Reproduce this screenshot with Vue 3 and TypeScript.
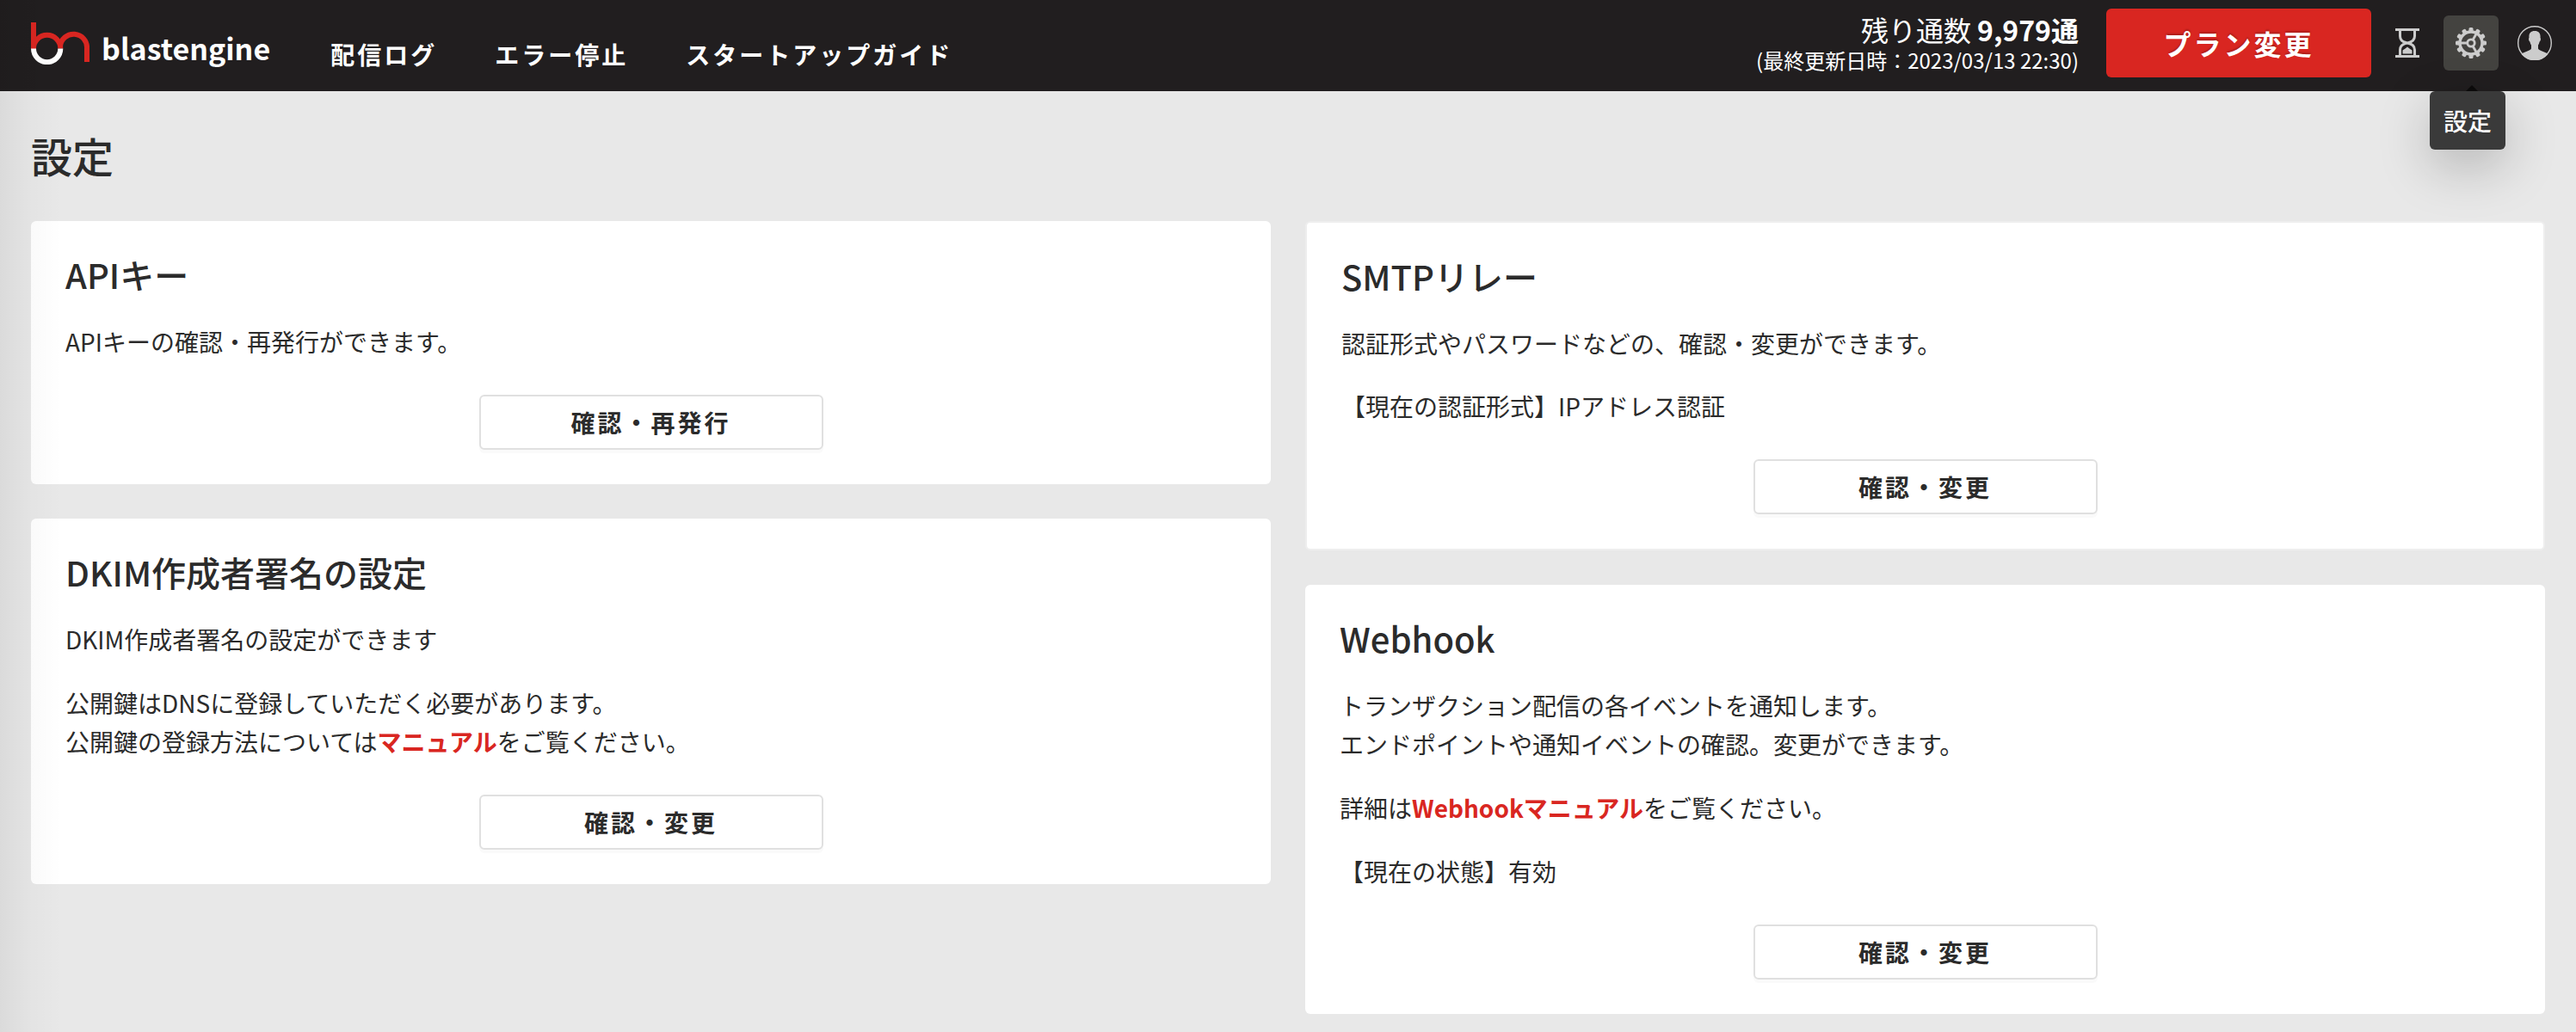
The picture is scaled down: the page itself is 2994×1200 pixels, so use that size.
<script setup lang="ts">
interface Segment {
  text: string
  href?: string
}
interface Card {
  id: string
  title: string
  paragraphs: Segment[][][]
  action: string
  outlined?: boolean
}

const navItems: string[] = ['配信ログ', 'エラー停止', 'スタートアップガイド']

const columns: Card[][] = [
  [
    {
      id: 'api',
      title: 'APIキー',
      paragraphs: [[[{ text: 'APIキーの確認・再発行ができます。' }]]],
      action: '確認・再発行',
    },
    {
      id: 'dkim',
      title: 'DKIM作成者署名の設定',
      paragraphs: [
        [[{ text: 'DKIM作成者署名の設定ができます' }]],
        [
          [{ text: '公開鍵はDNSに登録していただく必要があります。' }],
          [
            { text: '公開鍵の登録方法については' },
            { text: 'マニュアル', href: '#manual' },
            { text: 'をご覧ください。' },
          ],
        ],
      ],
      action: '確認・変更',
    },
  ],
  [
    {
      id: 'smtp',
      title: 'SMTPリレー',
      outlined: true,
      paragraphs: [
        [[{ text: '認証形式やパスワードなどの、確認・変更ができます。' }]],
        [[{ text: '【現在の認証形式】IPアドレス認証' }]],
      ],
      action: '確認・変更',
    },
    {
      id: 'webhook',
      title: 'Webhook',
      paragraphs: [
        [
          [{ text: 'トランザクション配信の各イベントを通知します。' }],
          [{ text: 'エンドポイントや通知イベントの確認。変更ができます。' }],
        ],
        [
          [
            { text: '詳細は' },
            { text: 'Webhookマニュアル', href: '#webhook-manual' },
            { text: 'をご覧ください。' },
          ],
        ],
        [[{ text: '【現在の状態】有効' }]],
      ],
      action: '確認・変更',
    },
  ],
]

const teeth: number[] = Array.from({ length: 12 }, (_, i) => i * 30)
</script>

<template>
  <div class="page">
    <header class="header">
      <a class="brand" href="#top">
        <svg class="brand-mark" viewBox="0 0 68 49" aria-hidden="true">
          <path d="M3 0V31" stroke="#d92621" stroke-width="6" fill="none" />
          <path d="M3 30.500A15.600 15.600 0 0 1 34.300 30.500" stroke="#d92621" stroke-width="6" fill="none" />
          <path d="M34 28A15.500 15.500 0 0 1 65 30.500V46" stroke="#d92621" stroke-width="6" fill="none" />
          <path d="M3 30.500A15.600 15.600 0 0 0 34.300 30.500" stroke="#fff" stroke-width="6" fill="none" />
        </svg>
        <span class="brand-name">blastengine</span>
      </a>
      <nav class="nav">
        <a v-for="item in navItems" :key="item" class="nav-link" href="#nav">{{ item }}</a>
      </nav>
      <div class="quota">
        <div class="quota-count">残り通数 <strong>9,979通</strong></div>
        <div class="quota-date">(最終更新日時：2023/03/13 22:30)</div>
      </div>
      <button class="plan-button" type="button">プラン変更</button>
      <div class="tools">
        <button class="tool" type="button" aria-label="履歴">
          <svg viewBox="0 0 40 40" aria-hidden="true">
            <path d="M6 3h28v3H6zM6 34h28v3H6z" fill="#ccc" />
            <path
              d="M11.500 6v6c0 4 3 7 8.500 8 5.500-1 8.500-4 8.500-8V6M11.500 34v-6c0-4 3-7 8.500-8 5.500 1 8.500 4 8.500 8v6"
              fill="none" stroke="#ccc" stroke-width="3"
            />
            <path d="M14.500 32.500v-4l3-2 2.500-2 2.500 2 3 2v4z" fill="#ccc" />
          </svg>
        </button>
        <div class="tool-wrap">
          <button class="tool tool-active" type="button" aria-label="設定" aria-describedby="settings-tip">
            <svg viewBox="0 0 40 40" aria-hidden="true">
              <g fill="none" stroke="#ccc">
                <circle cx="20" cy="20" r="13" stroke-width="3.400" />
                <circle cx="20" cy="20" r="4.200" stroke-width="2.800" />
                <path d="M16 20H7M22 16.500L26.500 8.700M22 23.500L26.500 31.300" stroke-width="2.800" />
              </g>
              <rect
                v-for="angle in teeth" :key="angle"
                x="17.500" y="2" width="5" height="5" rx="1.500" fill="#ccc"
                :transform="`rotate(${angle} 20 20)`"
              />
            </svg>
          </button>
          <div id="settings-tip" class="tooltip" role="tooltip">設定</div>
        </div>
        <button class="tool" type="button" aria-label="アカウント">
          <svg viewBox="0 0 40 40" aria-hidden="true">
            <circle cx="20" cy="20" r="19.300" fill="none" stroke="#ccc" stroke-width="1.400" />
            <path
              d="M20 6c-5 0-7 3-6.500 8-1 .5-.3 4 .9 4.500.4 2 1 3 1.600 4v4c-1 3-9 3.500-11.500 6.500a20 20 0 0 0 31 0C33 30 25 29.500 24 26.500v-4c.6-1 1.200-2 1.600-4 1.200-.5 1.900-4 .9-4.500C27 9 25 6 20 6z"
              fill="#ccc"
            />
          </svg>
        </button>
      </div>
    </header>

    <main class="main">
      <h1 class="page-title">設定</h1>
      <div class="columns">
        <div v-for="(cards, c) in columns" :key="c" class="column">
          <section v-for="card in cards" :key="card.id" class="card" :class="{ outlined: card.outlined }">
            <h2 class="card-title">{{ card.title }}</h2>
            <div class="card-text">
              <p v-for="(lines, p) in card.paragraphs" :key="p">
                <span v-for="(line, l) in lines" :key="l" class="line"
                  ><template v-for="(seg, s) in line" :key="s"
                    ><a v-if="seg.href" :href="seg.href">{{ seg.text }}</a
                    ><template v-else>{{ seg.text }}</template></template
                  ></span
                >
              </p>
            </div>
            <button class="card-button" type="button">{{ card.action }}</button>
          </section>
        </div>
      </div>
    </main>
  </div>
</template>

<style>
body {
  background: #e8e8e8;
}
</style>

<style scoped>
.page {
  position: relative;
  min-height: 100vh;
  color: #2b2b2b;
  font-family: 'Noto Sans CJK JP', sans-serif;
  font-size: 28px;
  line-height: 45px;
}
.page::before {
  content: '';
  position: absolute;
  inset: 0 auto 0 0;
  width: 72px;
  background: linear-gradient(to right, rgba(0, 0, 0, 0.06), rgba(0, 0, 0, 0.02) 36px, transparent);
  pointer-events: none;
}
button {
  margin: 0;
  padding: 0;
  border: 0;
  font: inherit;
  color: inherit;
  cursor: pointer;
}
.header {
  display: flex;
  align-items: center;
  box-sizing: border-box;
  height: 106px;
  padding: 0 16px 6px 36px;
  background: #211e1f;
  color: #fff;
}
.brand {
  display: flex;
  align-items: center;
  gap: 14px;
  color: #fff;
  text-decoration: none;
}
.brand-mark {
  width: 68px;
  height: 49px;
}
.brand-name {
  padding-top: 10px;
  font-size: 34px;
  font-weight: 700;
}
.nav {
  display: flex;
  gap: 67px;
  margin-left: 70px;
  padding-top: 26px;
}
.nav-link {
  color: #fff;
  font-weight: 700;
  letter-spacing: 3px;
  text-decoration: none;
}
.quota {
  margin-left: auto;
  padding-top: 4px;
  text-align: right;
  white-space: nowrap;
}
.quota-count {
  font-size: 32px;
  line-height: 36px;
}
.quota-date {
  font-size: 24px;
  line-height: 36px;
}
.plan-button {
  width: 308px;
  height: 80px;
  margin-left: 32px;
  border-radius: 6px;
  background: #d92621;
  font-size: 32px;
  font-weight: 700;
  letter-spacing: 3px;
  text-shadow: 0 -2px 2px rgba(0, 0, 0, 0.2);
}
.tools {
  display: flex;
  gap: 10px;
  margin-left: 10px;
}
.tool {
  display: flex;
  align-items: center;
  justify-content: center;
  width: 64px;
  height: 64px;
  border-radius: 6px;
  background: transparent;
}
.tool svg {
  width: 40px;
  height: 40px;
}
.tool-active {
  background: #444340;
}
.tool-wrap {
  position: relative;
}
.tooltip {
  position: absolute;
  top: 88px;
  right: -8px;
  box-sizing: border-box;
  width: 88px;
  height: 68px;
  border-radius: 6px;
  background: #3a3a3a;
  box-shadow: 0 20px 60px rgba(0, 0, 0, 0.22);
  font-weight: 500;
  line-height: 68px;
  text-align: center;
}
.tooltip::before {
  content: '';
  position: absolute;
  bottom: 100%;
  right: 32px;
  border: 7px solid transparent;
  border-top: 0;
  border-bottom-color: #0b0a0a;
}
.main {
  padding: 38px 36px 22px;
}
.page-title {
  margin: 0 0 41px;
  font-size: 48px;
  font-weight: 500;
  line-height: 72px;
}
.columns {
  display: flex;
  align-items: flex-start;
  gap: 40px;
}
.column {
  display: flex;
  flex: 1 1 0;
  flex-direction: column;
  gap: 40px;
  min-width: 0;
}
.card {
  padding: 40px;
  border-radius: 6px;
  background: #fff;
}
.card.outlined {
  border: 2px solid #eee;
}
.card-title {
  margin: 0 0 34px;
  font-size: 40px;
  font-weight: 500;
  line-height: 44px;
}
.card-text p {
  margin: 0 0 29px;
}
.card.outlined .card-text p {
  margin-bottom: 28px;
}
.card .card-text p:last-child {
  margin-bottom: 39px;
}
.line {
  display: block;
}
.line a {
  color: #d92621;
  font-weight: 700;
  text-decoration: none;
}
.card-button {
  display: block;
  box-sizing: border-box;
  width: 400px;
  height: 64px;
  margin: 0 auto;
  border: 2px solid #e0e0e0;
  border-radius: 6px;
  background: #fff;
  box-shadow: 0 4px 0 #fafafa;
  font-weight: 700;
  letter-spacing: 3px;
}
</style>
